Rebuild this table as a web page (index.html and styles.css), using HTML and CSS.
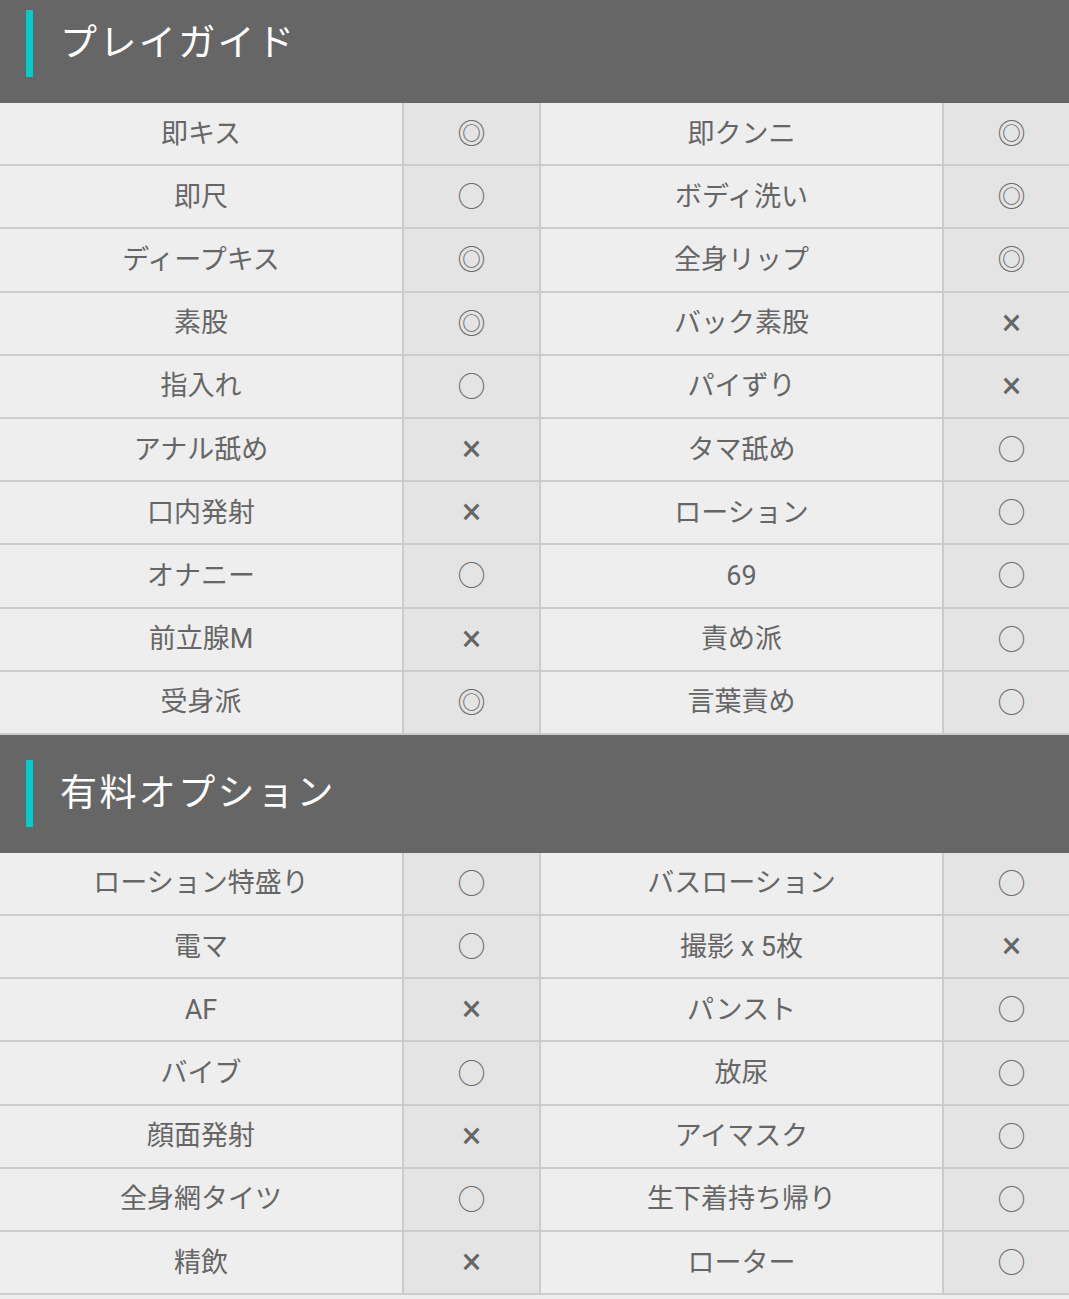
FILE: index.html
```html
<!DOCTYPE html>
<html lang="ja">
<head>
<meta charset="utf-8">
<link rel="stylesheet" href="styles.css">
</head>
<body>
<section class="block">
  <h2 class="head head-first"><span class="bar"></span><span class="title">プレイガイド</span></h2>
  <div class="table">
    <div class="c">即キス</div><div class="s">◎</div><div class="c">即クンニ</div><div class="s">◎</div>
    <div class="c">即尺</div><div class="s">○</div><div class="c">ボディ洗い</div><div class="s">◎</div>
    <div class="c">ディープキス</div><div class="s">◎</div><div class="c">全身リップ</div><div class="s">◎</div>
    <div class="c">素股</div><div class="s">◎</div><div class="c">バック素股</div><div class="s x">×</div>
    <div class="c">指入れ</div><div class="s">○</div><div class="c">パイずり</div><div class="s x">×</div>
    <div class="c">アナル舐め</div><div class="s x">×</div><div class="c">タマ舐め</div><div class="s">○</div>
    <div class="c">口内発射</div><div class="s x">×</div><div class="c">ローション</div><div class="s">○</div>
    <div class="c">オナニー</div><div class="s">○</div><div class="c">69</div><div class="s">○</div>
    <div class="c">前立腺M</div><div class="s x">×</div><div class="c">責め派</div><div class="s">○</div>
    <div class="c">受身派</div><div class="s">◎</div><div class="c">言葉責め</div><div class="s">○</div>
  </div>
</section>
<section class="block">
  <h2 class="head"><span class="bar"></span><span class="title">有料オプション</span></h2>
  <div class="table">
    <div class="c">ローション特盛り</div><div class="s">○</div><div class="c">バスローション</div><div class="s">○</div>
    <div class="c">電マ</div><div class="s">○</div><div class="c">撮影 x 5枚</div><div class="s x">×</div>
    <div class="c">AF</div><div class="s x">×</div><div class="c">パンスト</div><div class="s">○</div>
    <div class="c">バイブ</div><div class="s">○</div><div class="c">放尿</div><div class="s">○</div>
    <div class="c">顔面発射</div><div class="s x">×</div><div class="c">アイマスク</div><div class="s">○</div>
    <div class="c">全身網タイツ</div><div class="s">○</div><div class="c">生下着持ち帰り</div><div class="s">○</div>
    <div class="c">精飲</div><div class="s x">×</div><div class="c">ローター</div><div class="s">○</div>
  </div>
</section>
</body>
</html>
```
FILE: styles.css
```css
html, body {
  margin: 0;
  padding: 0;
  background: #eeeeee;
  overflow-x: hidden;
}
body {
  font-family: Roboto, "Noto Sans CJK JP", sans-serif;
  color: #666666;
}
.head {
  margin: 0;
  background: #666666;
  display: flex;
  align-items: center;
  padding: 25px 0 26px 26px;
  font-weight: 400;
}
.head-first {
  padding-top: 10px;
}
.bar {
  display: block;
  width: 7px;
  height: 67px;
  background: #00cccc;
  flex: none;
}
.title {
  color: #ffffff;
  font-size: 37px;
  letter-spacing: 2.4px;
  margin-left: 27px;
  line-height: 1;
}
.table {
  display: grid;
  grid-template-columns: 402px 135px 401px 135px;
  grid-auto-rows: 61.2px;
  gap: 2px;
  width: 1079px;
  background: #cccccc;
  padding-bottom: 2px;
}
.c, .s {
  display: flex;
  align-items: center;
  justify-content: center;
  line-height: 1;
}
.c {
  background: #eeeeee;
  padding-top: 1px;
  font-size: 27px;
}
.s {
  background: #e4e4e4;
  padding-bottom: 3px;
  font-family: "Noto Sans CJK JP", sans-serif;
  font-size: 28px;
  color: #6e6e6e;
}
.s.x {
  font-family: Roboto, sans-serif;
  font-size: 36px;
  font-weight: 400;
  color: #666666;
  padding-bottom: 1px;
}
```
